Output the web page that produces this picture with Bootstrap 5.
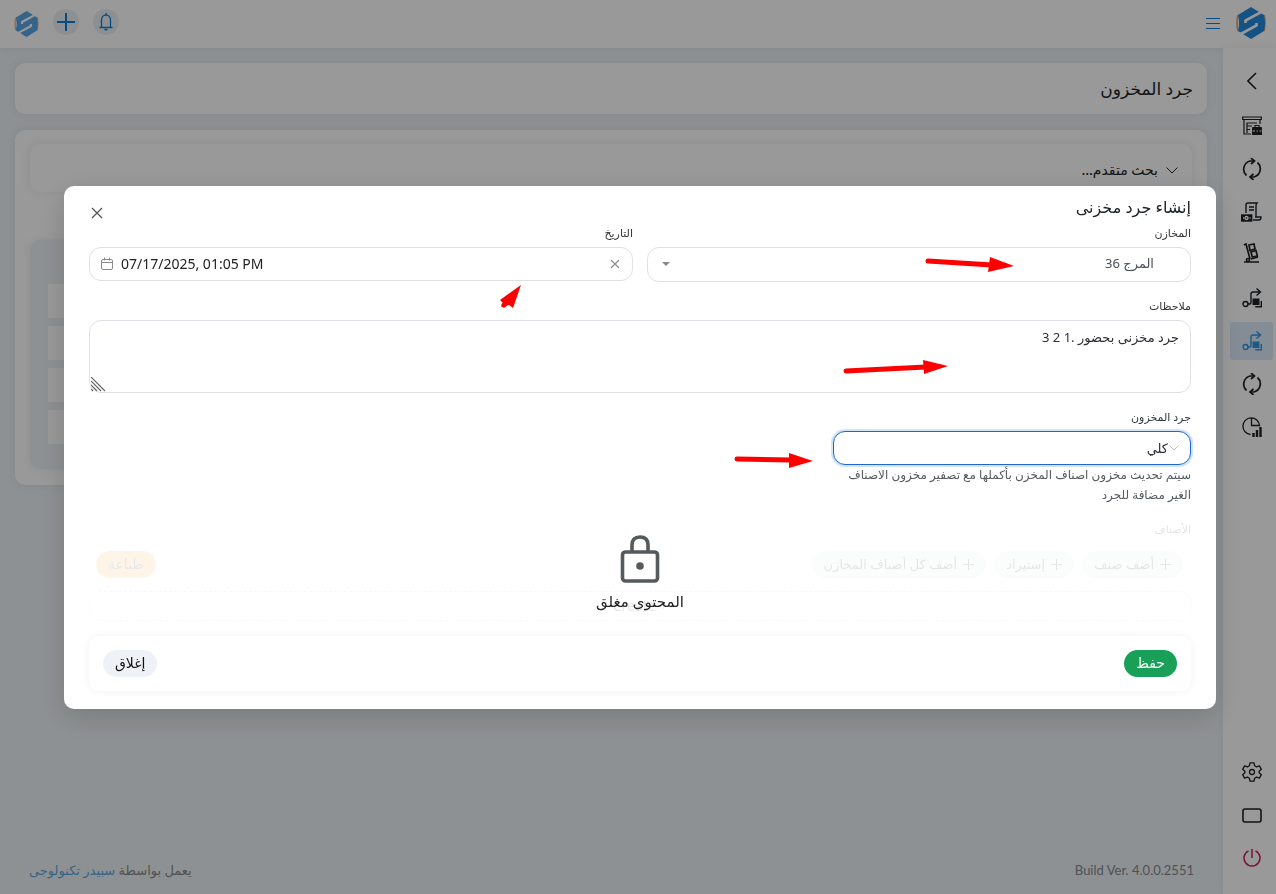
<!DOCTYPE html>
<html lang="ar" dir="rtl">
<head>
<meta charset="utf-8">
<meta name="viewport" content="width=device-width, initial-scale=1">
<title>جرد المخزون</title>
<link href="https://cdn.jsdelivr.net/npm/bootstrap@5.3.0/dist/css/bootstrap.min.css" rel="stylesheet">
<style>
body{font-family:"Noto Sans","DejaVu Sans",sans-serif;font-size:14px;line-height:20px;background:#edf2f5;color:#212529}
.topbar{height:48px;box-shadow:0 0 8px rgba(0,0,0,.08)}
.top-brand{padding-right:10px;padding-bottom:2px}
.top-tools{padding-left:14px;gap:14px}
.menu-btn,.round-btn,.side-btn{border:0;background:none;padding:0;color:inherit;display:flex;align-items:center;justify-content:center}
.menu-btn,.round-btn{color:#0d7fdb}
.round-btn{width:26px;height:26px;border-radius:50%;background:#e9f0f6}
.side{width:53px;padding:12px 3px 17px 7px;box-shadow:0 0 8px rgba(0,0,0,.06)}
.side-list{gap:5px}
.side-btn{width:43px;height:38px;border-radius:3px;text-decoration:none;color:#1d2023}
.side-btn.active{background:#dce9fb;color:#2f97e3}
.side-btn.power{color:#cf1f5b}
.main-area{padding:15px 16px 0 15px}
.panel{background:#fff;border-radius:10px;box-shadow:0 0 10px rgba(40,50,60,.09)}
.title-panel{height:51px;padding:0 14px}
.page-title{font-size:17px;line-height:24px;font-weight:500;margin:0}
.list-panel{padding:14px 15px 16px}
.search-panel{height:48px}
.search-panel button{border:0;background:none;color:inherit;font-size:14px;font-weight:500}
.skeleton{background:#edf2f5;border-radius:10px;padding:44px 18px 25px;box-shadow:0 0 8px rgba(40,50,60,.08)}
.skeleton-row{height:34px;background:#fff}
.page-foot{padding:0 29px 14px;font-size:13px;color:#85888a}
.build{font-family:Lato,sans-serif}
.page-foot a{color:#5ba7e0;text-decoration:none}
.modal-backdrop{--bs-backdrop-opacity:.4}
.stock-modal .modal-dialog{max-width:none;margin:0 60px 0 64px;min-height:100%}
.stock-modal .modal-content{border:0;border-radius:10px;padding:10px 25px 18px;box-shadow:0 8px 28px rgba(0,0,0,.16)}
.modal-head{height:24px}
.modal-title{font-size:16px;line-height:22px;font-weight:500}
.close-btn{border:0;background:none;padding:0;width:16px;height:16px;color:#555;display:flex;margin-top:9px}
.close-btn svg{margin:auto}
.field-pair{gap:14px}
.field-next{padding-top:11px}
.lbl{display:block;font-size:11px;line-height:25px;height:27px;color:#333639}
.lbl-faded{opacity:.13}
.box-field{border:1px solid #e0e0e6;border-radius:12px;background:#fff;font-size:14px;color:#2b2f33;width:100%}
.pick{appearance:none;height:35px;padding:0 36px 2px;font-size:13px;color:#495057;background:#fff url("data:image/svg+xml,%3Csvg xmlns='http://www.w3.org/2000/svg' width='8' height='4'%3E%3Cpath d='M0 0h8L4 4z' fill='%23888'/%3E%3C/svg%3E") no-repeat 14px 14px}
.date-box{height:34px;padding:0 12px 0 11px}
.date-box input{border:0;outline:0;min-width:0;background:none;color:#222;padding:0}
.date-box button{border:0;background:none;padding:0;color:#8c8c8c;display:flex}
.notes{display:block;height:73px;padding:6px 11px;font-size:13px;line-height:20px;resize:none}
.grip{left:2px;bottom:1px;color:#666}
.kind{width:358px}
.kind select{appearance:none;height:34px;padding:0 22px;font-size:13px;border:1px solid #2065d1;border-radius:12px;box-shadow:0 0 0 2px #d2e5fa;background:#fff url("data:image/svg+xml,%3Csvg xmlns='http://www.w3.org/2000/svg' width='10' height='6'%3E%3Cpath d='M.5.5L5 5 9.500.5' fill='none' stroke='%23c2c2c2'/%3E%3C/svg%3E") no-repeat right 11px center}
.hint{font-size:12px;line-height:20px;color:#555a5f;white-space:nowrap}
.locked{opacity:.11;padding:0 8px 0 7px}
.pill{border:0;border-radius:14px;height:27px;padding:0 12px;font-size:14px;line-height:20px;display:inline-flex;align-items:center;white-space:nowrap}
.pill-add{background:#dff3ea;color:#222;font-size:13px;gap:6px}
.pill-print{background:#ffa63a;color:#33475b}
.pill-save{background:#18a058;color:#fff}
.pill-close{background:#eef2f6;color:#111}
.new-row{height:30px;margin-top:13px;border:1px dashed #ebedef;border-radius:10px;background:none;width:100%;font-size:14px;opacity:.3;padding:0;color:#aaa}
.lock-note{bottom:98px;font-size:15px;line-height:20px;color:#222}
.foot-card{height:55px;margin-top:15px;padding:0 14px;border-radius:10px;box-shadow:0 0 8px rgba(0,0,0,.06)}
.marks{pointer-events:none}
</style>
</head>
<body>
<svg width="0" height="0" class="position-absolute" aria-hidden="true">
  <defs>
    <symbol id="logo" viewBox="0 0 30 32">
      <path d="M2 8Q0 16 2 24M28 8q2 8 0 16" fill="none" stroke="#ed9a63" stroke-width="1.600"/>
      <path d="M15 0l13 8q2 8 0 16l-13 8-13-8Q4 16 2 8z" fill="#2489dc"/>
      <path d="M29 3L9.500 13.500V16M1 29l19.500-10.500V16" fill="none" stroke="#fff" stroke-width="2.600"/>
    </symbol>
    <symbol id="sync" viewBox="0 0 20 22">
      <g fill="none" stroke="currentColor" stroke-width="1.700"><path d="M4.500 17.500A8.500 8.500 0 0 1 8 3h4M15.500 4.500A8.500 8.500 0 0 1 12 19H9"/><path d="M9 0l3.500 3L9 6M11.500 16L8 19l3.500 3"/></g>
    </symbol>
    <symbol id="route" viewBox="0 0 20 20">
      <g fill="none" stroke="currentColor" stroke-width="1.400"><circle cx="3.500" cy="16" r="2.500"/><path d="M6 16h1.500q1.500 0 1.500-1.500V6q0-2 2-2h7M14.500.5L18.500 4l-4 3.500M19.300 13v5.800h-6"/></g><path d="M10.500 10.500h7v6.500h-7z" fill="currentColor"/>
    </symbol>
  </defs>
</svg>

<div class="d-flex flex-column min-vh-100">
  <header class="topbar bg-white d-flex align-items-center justify-content-between">
    <div class="top-brand d-flex align-items-center gap-3">
      <svg width="30" height="32"><use href="#logo"/></svg>
      <button class="menu-btn" aria-label="القائمة"><svg width="14" height="11" fill="none" stroke="currentColor"><path d="M0 .5h14M0 5.500h14M0 10.500h14"/></svg></button>
    </div>
    <div class="top-tools d-flex align-items-center pb-1">
      <button class="round-btn" aria-label="الإشعارات"><svg width="14" height="18" viewBox="0 0 14 18" fill="none" stroke="currentColor" stroke-width="1.300"><path d="M.5 14.500h13M2.500 14V7a4.500 5 0 0 1 9 0v7M7 0v2M5.500 16q1.500 1.500 3 0"/></svg></button>
      <button class="round-btn" aria-label="إضافة"><svg width="18" height="18" stroke="currentColor" stroke-width="2"><path d="M0 9h18M9 0v18"/></svg></button>
      <svg class="mt-1 opacity-75" width="25" height="26"><use href="#logo"/></svg>
    </div>
  </header>

  <div class="d-flex flex-grow-1">
    <nav class="side bg-white d-flex flex-column align-items-center flex-shrink-0">
      <div class="side-list d-flex flex-column">
        <a href="#" class="side-btn mb-1" aria-label="طي"><svg class="mt-1" width="10" height="18" fill="none" stroke="currentColor" stroke-width="1.600"><path d="M9 1L1 9l8 8"/></svg></a>
        <a href="#" class="side-btn" aria-label="المتجر"><svg width="20" height="20" viewBox="0 0 20 20" fill="none" stroke="currentColor" stroke-width="1.200"><path d="M.7 1h18.600v2.500H.7zM2 4v14h7M18 4v4M5 17V7h10M5 10h5M5 13.500h3"/><path d="M10 12q0-1 1-1h8q1 0 1 1v7H10z" fill="currentColor" stroke="none"/><path d="M13 11.500V9.500h4v2"/><path d="M10.500 15h2.500M14.500 15h1.500M17.500 15h2" stroke="#fff" stroke-width="1"/></svg></a>
        <a href="#" class="side-btn" aria-label="تحديث"><svg width="20" height="22"><use href="#sync"/></svg></a>
        <a href="#" class="side-btn" aria-label="الفواتير"><svg width="21" height="20" viewBox="0 0 21 20" fill="none" stroke="currentColor" stroke-width="1.400"><path d="M5 11V3q0-2 2-2h9q-1 1-1 3v11M8 5h5M8 8h5M12 18h6q2 0 2-3h-6"/><rect x=".7" y="13" width="10" height="6" fill="currentColor"/><circle cx="5.500" cy="16" r="1.500" stroke="#fff"/><path d="M2 16h1M8.500 16h1" stroke="#fff"/></svg></a>
        <a href="#" class="side-btn" aria-label="المخازن"><svg class="mb-1" width="18" height="20" viewBox="0 0 18 20" fill="none" stroke="currentColor" stroke-width="1.700"><path d="M1 2l2-1 4 15M1 19h15"/><path d="M6 2l5-1 1 5-5 1.500zM8 9l5-1.500 1.300 5.500-5 1z"/><path d="M8 16l7-2"/><circle cx="5" cy="17" r="1.500"/></svg></a>
        <a href="#" class="side-btn" aria-label="تحويل"><svg width="20" height="20"><use href="#route"/></svg></a>
        <a href="#" class="side-btn active" aria-label="جرد المخزون"><svg width="20" height="20"><use href="#route"/></svg></a>
        <a href="#" class="side-btn" aria-label="مزامنة"><svg width="20" height="22"><use href="#sync"/></svg></a>
        <a href="#" class="side-btn" aria-label="التقارير"><svg width="20" height="20" viewBox="0 0 20 20" fill="none" stroke="currentColor" stroke-width="1.300"><path d="M8.500 17.500A8.300 8.300 0 1 1 17.500 8.500H9.500V1"/><path d="M11.500 20v-4M15 20v-7M18.500 20v-10" stroke-width="2.400"/></svg></a>
      </div>
      <div class="side-list d-flex flex-column mt-auto">
        <a href="#" class="side-btn" aria-label="الإعدادات"><svg width="20" height="20" viewBox="0 0 20 20" fill="none" stroke="currentColor" stroke-width="1.300" stroke-linejoin="round"><path d="M8 .8h4l.6 3 1.900 1.100 2.900-1 2 3.400-2.300 2v1.400l2.300 2-2 3.400-2.900-1-1.900 1.100-.6 3H8l-.6-3-1.900-1.100-2.900 1-2-3.400 2.300-2V9.300l-2.300-2 2-3.400 2.900 1 1.900-1.100z"/><circle cx="10" cy="10" r="2.500"/></svg></a>
        <a href="#" class="side-btn" aria-label="شاشة"><svg width="20" height="15" fill="none" stroke="currentColor" stroke-width="1.600"><rect x="1" y="1" width="18" height="13" rx="2"/></svg></a>
        <a href="#" class="side-btn power" aria-label="خروج"><svg width="18" height="18" fill="none" stroke="currentColor" stroke-width="1.500"><path d="M5.500 1.800a8 8 0 1 0 7 0M9 0v9"/></svg></a>
      </div>
    </nav>

    <div class="flex-grow-1 d-flex flex-column">
      <main class="main-area">
        <div class="panel title-panel d-flex align-items-center mb-3"><h1 class="page-title">جرد المخزون</h1></div>
        <div class="panel list-panel">
          <div class="panel search-panel d-flex align-items-center px-2 pt-1"><button class="d-flex align-items-center gap-2"><svg width="12" height="7" fill="none" stroke="currentColor"><path d="M.5.5L6 6 11.500.5"/></svg>بحث متقدم...</button></div>
          <div class="skeleton d-flex flex-column gap-2 mt-5">
            <div class="skeleton-row"></div><div class="skeleton-row"></div><div class="skeleton-row"></div><div class="skeleton-row"></div>
          </div>
        </div>
      </main>
      <footer class="page-foot mt-auto d-flex justify-content-between">
        <span class="build" dir="ltr">Build Ver. 4.0.0.2551</span>
        <span>يعمل بواسطة <a href="#">سبيدر تكنولوجى</a></span>
      </footer>
    </div>
  </div>
</div>

<div class="modal-backdrop show"></div>
<div class="modal show d-block stock-modal" role="dialog" aria-modal="true" aria-labelledby="dlg-title">
  <div class="modal-dialog modal-dialog-centered">
    <form class="modal-content" onsubmit="return false">
      <div class="modal-head d-flex justify-content-between">
        <h2 class="modal-title" id="dlg-title">إنشاء جرد مخزنى</h2>
        <button type="button" class="close-btn" aria-label="إغلاق النافذة"><svg width="12" height="12" stroke="currentColor" stroke-width="1.300"><path d="M1 1l10 10M11 1L1 11"/></svg></button>
      </div>
      <div class="field-pair d-flex">
        <div class="flex-fill w-50">
          <label class="lbl" for="store">المخازن</label>
          <select id="store" class="box-field pick"><option>المرج 36</option></select>
        </div>
        <div class="flex-fill w-50">
          <label class="lbl" for="date">التاريخ</label>
          <div class="box-field date-box d-flex align-items-center gap-2" dir="ltr">
            <svg width="12" height="14" fill="none" stroke="#8a8a8a"><rect x=".5" y="2.500" width="11" height="10" rx="1.500"/><path d="M.5 5.500h11M3.500.5v3M8.500.5v3"/></svg>
            <input id="date" class="flex-grow-1" value="07/17/2025, 01:05 PM">
            <button type="button" aria-label="مسح"><svg width="10" height="10" stroke="currentColor" stroke-width="1.100"><path d="M1 1l8 8M9 1l-8 8"/></svg></button>
          </div>
        </div>
      </div>
      <div class="field-next position-relative">
        <label class="lbl" for="notes">ملاحظات</label>
        <textarea id="notes" class="box-field notes">جرد مخزنى بحضور .1 2 3</textarea>
        <svg class="grip position-absolute" width="15" height="15" stroke="currentColor" stroke-width="1.200"><path d="M0 0l14 14M0 4l10 10M0 8l6 6M0 12l2 2"/></svg>
      </div>
      <div class="kind field-next">
        <label class="lbl" for="kind">جرد المخزون</label>
        <select id="kind" class="box-field"><option>كلي</option></select>
        <div class="hint">سيتم تحديث مخزون اصناف المخزن بأكملها مع تصفير مخزون الاصناف<br>الغير مضافة للجرد</div>
      </div>
      <div class="field-next">
        <div class="lbl lbl-faded">الأصناف</div>
        <div class="locked d-flex justify-content-between mt-2">
          <div class="d-flex gap-2">
            <button type="button" class="pill pill-add" disabled><svg width="11" height="11" stroke="currentColor"><path d="M0 5.500h11M5.500 0v11"/></svg>أضف صنف</button>
            <button type="button" class="pill pill-add" disabled><svg width="11" height="11" stroke="currentColor"><path d="M0 5.500h11M5.500 0v11"/></svg>إستيراد</button>
            <button type="button" class="pill pill-add" disabled><svg width="11" height="11" stroke="currentColor"><path d="M0 5.500h11M5.500 0v11"/></svg>أضف كل أصناف المخازن</button>
          </div>
          <button type="button" class="pill pill-print" disabled>طباعة</button>
        </div>
        <button type="button" class="new-row d-block" disabled>+ Create</button>
      </div>
      <div class="lock-note position-absolute start-0 end-0 text-center">
        <svg class="d-block mx-auto mb-2" width="40" height="48" fill="none" stroke="#555a5c" stroke-width="3.600"><rect x="2.500" y="17" width="35" height="29" rx="3"/><path d="M12 17V10q0-8 8-8t8 8v7"/><circle cx="20" cy="31" r="2" fill="#555a5c"/></svg>
        المحتوى مغلق
      </div>
      <div class="foot-card d-flex align-items-center justify-content-between">
        <button class="pill pill-save">حفظ</button>
        <button type="button" class="pill pill-close">إغلاق</button>
      </div>
      <svg class="marks position-absolute top-0 start-0" width="1152" height="523" fill="#f00" stroke="#f00" stroke-width="5" stroke-linecap="round" aria-hidden="true">
        <path d="M864 75l64 4M782 185l80-4M673 273l54 1M440 119l7-7"/>
        <path stroke="none" d="M950 80l-26 6 2-15zM884 180l-24 8-1-14zM749 275l-24 7v-15zM457 99l-21 15 3 3-2 4 8-2 4 3z"/>
      </svg>
    </form>
  </div>
</div>
<script src="https://cdn.jsdelivr.net/npm/bootstrap@5.3.0/dist/js/bootstrap.bundle.min.js"></script>
</body>
</html>
